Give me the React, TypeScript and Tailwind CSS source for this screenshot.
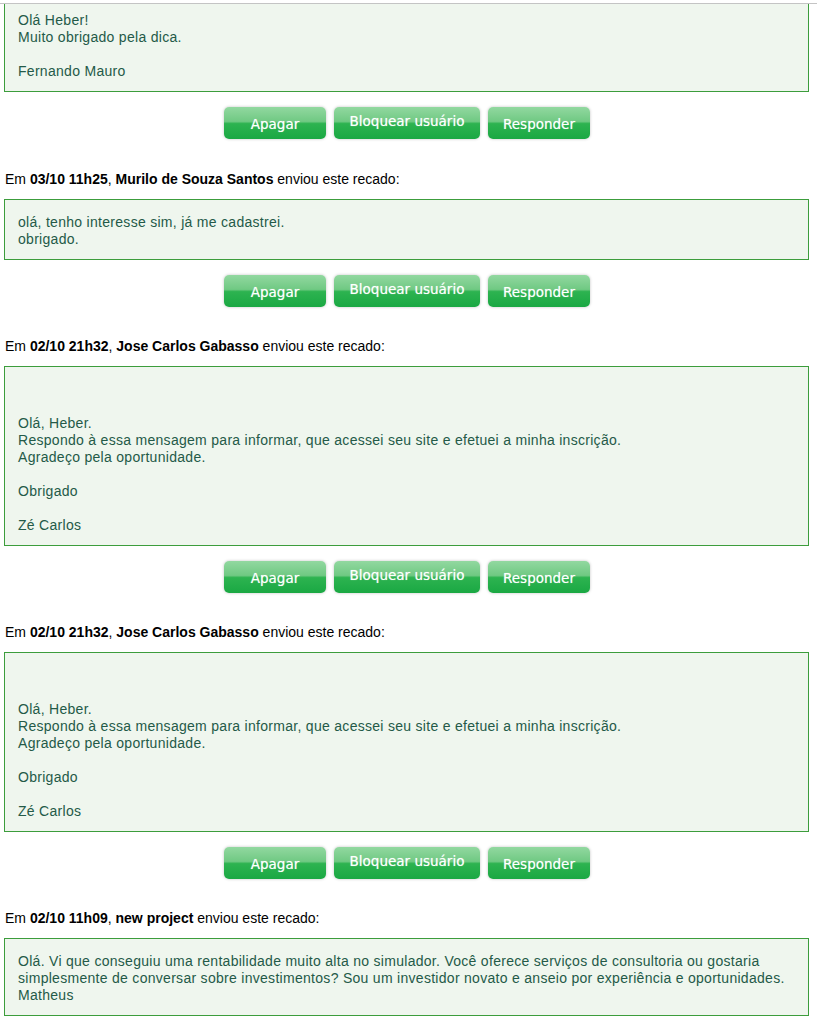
import React from 'react'

interface Recado {
  date?: string
  author?: string
  lines: string[]
}

const recados: Recado[] = [
  {
    lines: ['Olá Heber!', 'Muito obrigado pela dica.', '', 'Fernando Mauro'],
  },
  {
    date: '03/10 11h25',
    author: 'Murilo de Souza Santos',
    lines: ['olá, tenho interesse sim, já me cadastrei.', 'obrigado.'],
  },
  {
    date: '02/10 21h32',
    author: 'Jose Carlos Gabasso',
    lines: [
      '',
      '',
      'Olá, Heber.',
      'Respondo à essa mensagem para informar, que acessei seu site e efetuei a minha inscrição.',
      'Agradeço pela oportunidade.',
      '',
      'Obrigado',
      '',
      'Zé Carlos',
    ],
  },
  {
    date: '02/10 21h32',
    author: 'Jose Carlos Gabasso',
    lines: [
      '',
      '',
      'Olá, Heber.',
      'Respondo à essa mensagem para informar, que acessei seu site e efetuei a minha inscrição.',
      'Agradeço pela oportunidade.',
      '',
      'Obrigado',
      '',
      'Zé Carlos',
    ],
  },
  {
    date: '02/10 11h09',
    author: 'new project',
    lines: [
      'Olá. Vi que conseguiu uma rentabilidade muito alta no simulador. Você oferece serviços de consultoria ou gostaria',
      'simplesmente de conversar sobre investimentos? Sou um investidor novato e anseio por experiência e oportunidades.',
      'Matheus',
    ],
  },
]

function GreenButton({ label, width, offset }: { label: string; width: string; offset: string }) {
  return (
    <button
      type="button"
      className={`${width} ${offset} h-[32px] rounded-[5px] bg-[linear-gradient(to_bottom,#92d8a0_0%,#70c983_45%,#2db350_52%,#1aa843_100%)] text-white text-[13.5px] font-['DejaVu_Sans',Verdana,sans-serif] [text-shadow:0_0_1px_rgba(255,255,255,0.6)] shadow-[0_0_3px_rgba(0,0,0,0.25)] flex items-center justify-center`}
    >
      {label}
    </button>
  )
}

function Buttons() {
  return (
    <div className="mt-[15px] flex justify-center gap-[8px] pr-[3px]">
      <GreenButton label="Apagar" width="w-[102px]" offset="pt-[3px]" />
      <GreenButton label="Bloquear usuário" width="w-[146px]" offset="pb-[3px]" />
      <GreenButton label="Responder" width="w-[102px]" offset="pt-[2px]" />
    </div>
  )
}

export default function App() {
  return (
    <div className="min-h-[1027px] bg-white font-['Liberation_Sans',Arial,sans-serif] text-[14px] leading-[17px] pt-[3px]">
      <div className="border-t border-[#c4c4c4]" />
      {recados.map((r, i) => (
        <div key={i}>
          {r.date && (
            <div className={`${i === 1 ? 'mt-[32px]' : 'mt-[31px]'} pl-[5px] text-black`}>
              Em <b>{r.date}</b>, <b>{r.author}</b> enviou este recado:
            </div>
          )}
          <div
            className={`ml-[4px] w-[805px] border-[#3c9d3c] bg-[#eff6ee] text-[#245a48] tracking-[0.29px] px-[13px] ${
              i === 0 ? 'border-x border-b pt-[8px] pb-[11px]' : 'border mt-[11px] pt-[14px] pb-[11px]'
            }`}
          >
            {r.lines.map((l, j) => (
              <div key={j} className="h-[17px] whitespace-nowrap">
                {l}
              </div>
            ))}
          </div>
          {i < recados.length - 1 && <Buttons />}
        </div>
      ))}
    </div>
  )
}
